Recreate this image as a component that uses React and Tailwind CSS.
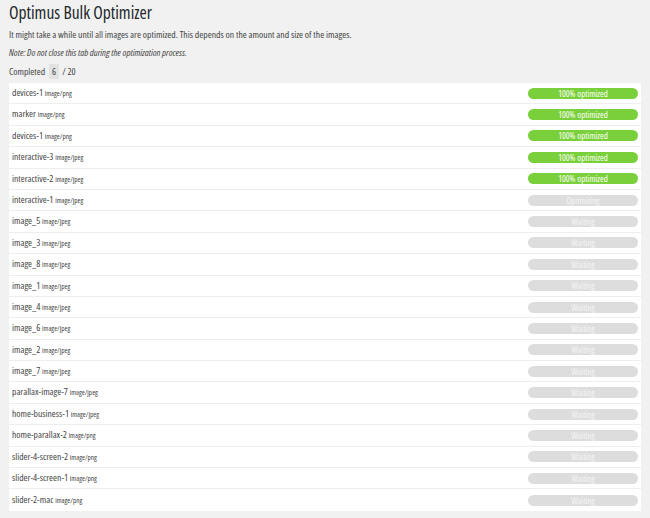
export default function App() {
  const items = [
    ["devices-1", "image/png", "done"],
    ["marker", "image/png", "done"],
    ["devices-1", "image/png", "done"],
    ["interactive-3", "image/jpeg", "done"],
    ["interactive-2", "image/jpeg", "done"],
    ["interactive-1", "image/jpeg", "opt"],
    ["image_5", "image/jpeg", "wait"],
    ["image_3", "image/jpeg", "wait"],
    ["image_8", "image/jpeg", "wait"],
    ["image_1", "image/jpeg", "wait"],
    ["image_4", "image/jpeg", "wait"],
    ["image_6", "image/jpeg", "wait"],
    ["image_2", "image/jpeg", "wait"],
    ["image_7", "image/jpeg", "wait"],
    ["parallax-image-7", "image/jpeg", "wait"],
    ["home-business-1", "image/jpeg", "wait"],
    ["home-parallax-2", "image/png", "wait"],
    ["slider-4-screen-2", "image/png", "wait"],
    ["slider-4-screen-1", "image/png", "wait"],
    ["slider-2-mac", "image/png", "wait"],
  ];
  return (
    <div className="w-[650px] h-[518px] bg-[#f1f1f1] text-[#444] overflow-hidden font-stretch-[75%]" style={{ fontFamily: '"Open Sans", sans-serif' }}>
      <div className="pl-[9px] pr-[9px] pt-[1px]">
        <h1 className="text-[17.5px] leading-[22px] text-[#23282d] font-normal">Optimus Bulk Optimizer</h1>
        <p className="text-[9.7px] leading-[13px] mt-[5px]">It might take a while until all images are optimized. This depends on the amount and size of the images.</p>
        <p className="text-[9.6px] leading-[13px] mt-[5px] italic">Note: Do not close this tab during the optimization process.</p>
        <p className="text-[9.6px] leading-[13px] mt-[5px] flex items-center">
          Completed <span className="ml-[4px] mr-[3px] bg-[#e2e2e2] px-[3px] py-[1px]">6</span> / 20
        </p>
        <div className="mt-[4px] w-[632px] bg-white">
          {items.map(([name, type, st], i) => (
            <div key={i} className={`h-[21.4px] flex items-center justify-between pl-[3px] pr-[3px] ${i < items.length - 1 ? "border-b border-[#eeeeee]" : ""}`}>
              <span className="text-[9.6px] text-[#444]">
                {name} <span className="text-[7.2px]">{type}</span>
              </span>
              {st === "done" ? (
                <span className="w-[110px] h-[11px] rounded-full bg-[#7ad03a] text-white text-[9px] leading-[11px] text-center">100% optimized</span>
              ) : (
                <span className="w-[110px] h-[11px] rounded-full bg-[#dddddd] text-[#f5f5f5] text-[9px] leading-[11px] text-center">
                  {st === "opt" ? "Optimizing" : "Waiting"}
                </span>
              )}
            </div>
          ))}
        </div>
      </div>
    </div>
  );
}
